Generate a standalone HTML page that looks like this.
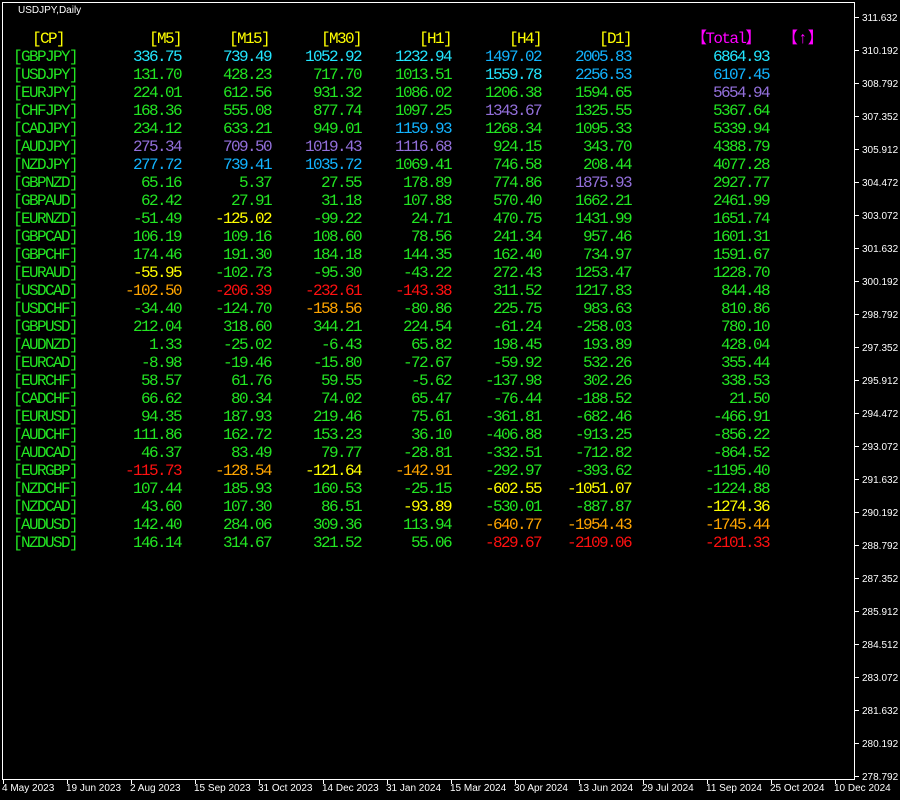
<!DOCTYPE html>
<html><head><meta charset="utf-8"><style>
*{margin:0;padding:0;box-sizing:border-box}
body{width:900px;height:800px;background:#000;position:relative;overflow:hidden;font-family:"Liberation Mono","Noto Sans CJK JP",monospace}
#frame{position:absolute;left:2px;top:2px;width:853px;height:778px;border:1px solid #fff}
.t{position:absolute;font-family:"Liberation Sans","DejaVu Sans",sans-serif;font-size:10px;color:#fff;white-space:nowrap;line-height:12px}
.tk{position:absolute;background:#fff}
.ax .t{margin-top:2px}
.row{position:absolute;left:0;width:900px;height:18px;font-size:16px;line-height:18px;letter-spacing:-1.6px}
.row span{position:absolute;top:0;white-space:nowrap}
.row span.n{width:120px;text-align:right}
.c0{left:13px}
.c1{left:61px}.c2{left:151px}.c3{left:241px}.c4{left:331px}.c5{left:421px}.c6{left:511px}.c7{left:649px}
.g{color:#22e622}.a{color:#22e6ff}.b{color:#12b4ff}.p{color:#9370db}.y{color:#ffff00}.o{color:#ffa500}.r{color:#ff1010}.m{color:#ff00ff}
</style></head><body>
<div id="frame"></div>
<div class="t" style="left:18px;top:5px">USDJPY,Daily</div>
<div class="ax">
<div class="tk" style="left:855px;top:17px;width:4px;height:1px"></div><div class="t" style="left:862px;top:11px">311.632</div>
<div class="tk" style="left:855px;top:50px;width:4px;height:1px"></div><div class="t" style="left:862px;top:44px">310.192</div>
<div class="tk" style="left:855px;top:83px;width:4px;height:1px"></div><div class="t" style="left:862px;top:77px">308.792</div>
<div class="tk" style="left:855px;top:116px;width:4px;height:1px"></div><div class="t" style="left:862px;top:110px">307.352</div>
<div class="tk" style="left:855px;top:149px;width:4px;height:1px"></div><div class="t" style="left:862px;top:143px">305.912</div>
<div class="tk" style="left:855px;top:182px;width:4px;height:1px"></div><div class="t" style="left:862px;top:176px">304.472</div>
<div class="tk" style="left:855px;top:215px;width:4px;height:1px"></div><div class="t" style="left:862px;top:209px">303.072</div>
<div class="tk" style="left:855px;top:248px;width:4px;height:1px"></div><div class="t" style="left:862px;top:242px">301.632</div>
<div class="tk" style="left:855px;top:281px;width:4px;height:1px"></div><div class="t" style="left:862px;top:275px">300.192</div>
<div class="tk" style="left:855px;top:314px;width:4px;height:1px"></div><div class="t" style="left:862px;top:308px">298.792</div>
<div class="tk" style="left:855px;top:347px;width:4px;height:1px"></div><div class="t" style="left:862px;top:341px">297.352</div>
<div class="tk" style="left:855px;top:380px;width:4px;height:1px"></div><div class="t" style="left:862px;top:374px">295.912</div>
<div class="tk" style="left:855px;top:413px;width:4px;height:1px"></div><div class="t" style="left:862px;top:407px">294.472</div>
<div class="tk" style="left:855px;top:446px;width:4px;height:1px"></div><div class="t" style="left:862px;top:440px">293.072</div>
<div class="tk" style="left:855px;top:479px;width:4px;height:1px"></div><div class="t" style="left:862px;top:473px">291.632</div>
<div class="tk" style="left:855px;top:512px;width:4px;height:1px"></div><div class="t" style="left:862px;top:506px">290.192</div>
<div class="tk" style="left:855px;top:545px;width:4px;height:1px"></div><div class="t" style="left:862px;top:539px">288.792</div>
<div class="tk" style="left:855px;top:578px;width:4px;height:1px"></div><div class="t" style="left:862px;top:572px">287.352</div>
<div class="tk" style="left:855px;top:611px;width:4px;height:1px"></div><div class="t" style="left:862px;top:605px">285.912</div>
<div class="tk" style="left:855px;top:644px;width:4px;height:1px"></div><div class="t" style="left:862px;top:638px">284.512</div>
<div class="tk" style="left:855px;top:677px;width:4px;height:1px"></div><div class="t" style="left:862px;top:671px">283.072</div>
<div class="tk" style="left:855px;top:710px;width:4px;height:1px"></div><div class="t" style="left:862px;top:704px">281.632</div>
<div class="tk" style="left:855px;top:743px;width:4px;height:1px"></div><div class="t" style="left:862px;top:737px">280.192</div>
<div class="tk" style="left:855px;top:776px;width:4px;height:1px"></div><div class="t" style="left:862px;top:770px">278.792</div>
</div>
<div class="tk" style="left:3px;top:780px;width:1px;height:4px"></div><div class="t" style="left:2px;top:783px">4 May 2023</div>
<div class="tk" style="left:67px;top:780px;width:1px;height:4px"></div><div class="t" style="left:66px;top:783px">19 Jun 2023</div>
<div class="tk" style="left:131px;top:780px;width:1px;height:4px"></div><div class="t" style="left:130px;top:783px">2 Aug 2023</div>
<div class="tk" style="left:195px;top:780px;width:1px;height:4px"></div><div class="t" style="left:194px;top:783px">15 Sep 2023</div>
<div class="tk" style="left:259px;top:780px;width:1px;height:4px"></div><div class="t" style="left:258px;top:783px">31 Oct 2023</div>
<div class="tk" style="left:323px;top:780px;width:1px;height:4px"></div><div class="t" style="left:322px;top:783px">14 Dec 2023</div>
<div class="tk" style="left:387px;top:780px;width:1px;height:4px"></div><div class="t" style="left:386px;top:783px">31 Jan 2024</div>
<div class="tk" style="left:451px;top:780px;width:1px;height:4px"></div><div class="t" style="left:450px;top:783px">15 Mar 2024</div>
<div class="tk" style="left:515px;top:780px;width:1px;height:4px"></div><div class="t" style="left:514px;top:783px">30 Apr 2024</div>
<div class="tk" style="left:579px;top:780px;width:1px;height:4px"></div><div class="t" style="left:578px;top:783px">13 Jun 2024</div>
<div class="tk" style="left:643px;top:780px;width:1px;height:4px"></div><div class="t" style="left:642px;top:783px">29 Jul 2024</div>
<div class="tk" style="left:707px;top:780px;width:1px;height:4px"></div><div class="t" style="left:706px;top:783px">11 Sep 2024</div>
<div class="tk" style="left:771px;top:780px;width:1px;height:4px"></div><div class="t" style="left:770px;top:783px">25 Oct 2024</div>
<div class="tk" style="left:835px;top:780px;width:1px;height:4px"></div><div class="t" style="left:834px;top:783px">10 Dec 2024</div>

<div class="row" style="top:30px">
<span class="y" style="left:32px">[CP]</span>
<span class="n y c1">[M5]</span><span class="n y" style="left:149px;width:120px;text-align:right">[M15]</span><span class="n y c3">[M30]</span><span class="n y c4">[H1]</span><span class="n y c5">[H4]</span><span class="n y c6">[D1]</span>
<span class="m" style="left:691px">【Total】</span><span class="m" style="left:782px;letter-spacing:0">【↑】</span>
</div>

<div class="row" style="top:48px"><span class="c0 g">[GBPJPY]</span><span class="n c1 a">336.75</span><span class="n c2 a">739.49</span><span class="n c3 a">1052.92</span><span class="n c4 a">1232.94</span><span class="n c5 b">1497.02</span><span class="n c6 b">2005.83</span><span class="n c7 a">6864.93</span></div>
<div class="row" style="top:66px"><span class="c0 g">[USDJPY]</span><span class="n c1 g">131.70</span><span class="n c2 g">428.23</span><span class="n c3 g">717.70</span><span class="n c4 g">1013.51</span><span class="n c5 a">1559.78</span><span class="n c6 b">2256.53</span><span class="n c7 b">6107.45</span></div>
<div class="row" style="top:84px"><span class="c0 g">[EURJPY]</span><span class="n c1 g">224.01</span><span class="n c2 g">612.56</span><span class="n c3 g">931.32</span><span class="n c4 g">1086.02</span><span class="n c5 g">1206.38</span><span class="n c6 g">1594.65</span><span class="n c7 p">5654.94</span></div>
<div class="row" style="top:102px"><span class="c0 g">[CHFJPY]</span><span class="n c1 g">168.36</span><span class="n c2 g">555.08</span><span class="n c3 g">877.74</span><span class="n c4 g">1097.25</span><span class="n c5 p">1343.67</span><span class="n c6 g">1325.55</span><span class="n c7 g">5367.64</span></div>
<div class="row" style="top:120px"><span class="c0 g">[CADJPY]</span><span class="n c1 g">234.12</span><span class="n c2 g">633.21</span><span class="n c3 g">949.01</span><span class="n c4 b">1159.93</span><span class="n c5 g">1268.34</span><span class="n c6 g">1095.33</span><span class="n c7 g">5339.94</span></div>
<div class="row" style="top:138px"><span class="c0 g">[AUDJPY]</span><span class="n c1 p">275.34</span><span class="n c2 p">709.50</span><span class="n c3 p">1019.43</span><span class="n c4 p">1116.68</span><span class="n c5 g">924.15</span><span class="n c6 g">343.70</span><span class="n c7 g">4388.79</span></div>
<div class="row" style="top:156px"><span class="c0 g">[NZDJPY]</span><span class="n c1 b">277.72</span><span class="n c2 b">739.41</span><span class="n c3 b">1035.72</span><span class="n c4 g">1069.41</span><span class="n c5 g">746.58</span><span class="n c6 g">208.44</span><span class="n c7 g">4077.28</span></div>
<div class="row" style="top:174px"><span class="c0 g">[GBPNZD]</span><span class="n c1 g">65.16</span><span class="n c2 g">5.37</span><span class="n c3 g">27.55</span><span class="n c4 g">178.89</span><span class="n c5 g">774.86</span><span class="n c6 p">1875.93</span><span class="n c7 g">2927.77</span></div>
<div class="row" style="top:192px"><span class="c0 g">[GBPAUD]</span><span class="n c1 g">62.42</span><span class="n c2 g">27.91</span><span class="n c3 g">31.18</span><span class="n c4 g">107.88</span><span class="n c5 g">570.40</span><span class="n c6 g">1662.21</span><span class="n c7 g">2461.99</span></div>
<div class="row" style="top:210px"><span class="c0 g">[EURNZD]</span><span class="n c1 g">-51.49</span><span class="n c2 y">-125.02</span><span class="n c3 g">-99.22</span><span class="n c4 g">24.71</span><span class="n c5 g">470.75</span><span class="n c6 g">1431.99</span><span class="n c7 g">1651.74</span></div>
<div class="row" style="top:228px"><span class="c0 g">[GBPCAD]</span><span class="n c1 g">106.19</span><span class="n c2 g">109.16</span><span class="n c3 g">108.60</span><span class="n c4 g">78.56</span><span class="n c5 g">241.34</span><span class="n c6 g">957.46</span><span class="n c7 g">1601.31</span></div>
<div class="row" style="top:246px"><span class="c0 g">[GBPCHF]</span><span class="n c1 g">174.46</span><span class="n c2 g">191.30</span><span class="n c3 g">184.18</span><span class="n c4 g">144.35</span><span class="n c5 g">162.40</span><span class="n c6 g">734.97</span><span class="n c7 g">1591.67</span></div>
<div class="row" style="top:264px"><span class="c0 g">[EURAUD]</span><span class="n c1 y">-55.95</span><span class="n c2 g">-102.73</span><span class="n c3 g">-95.30</span><span class="n c4 g">-43.22</span><span class="n c5 g">272.43</span><span class="n c6 g">1253.47</span><span class="n c7 g">1228.70</span></div>
<div class="row" style="top:282px"><span class="c0 g">[USDCAD]</span><span class="n c1 o">-102.50</span><span class="n c2 r">-206.39</span><span class="n c3 r">-232.61</span><span class="n c4 r">-143.38</span><span class="n c5 g">311.52</span><span class="n c6 g">1217.83</span><span class="n c7 g">844.48</span></div>
<div class="row" style="top:300px"><span class="c0 g">[USDCHF]</span><span class="n c1 g">-34.40</span><span class="n c2 g">-124.70</span><span class="n c3 o">-158.56</span><span class="n c4 g">-80.86</span><span class="n c5 g">225.75</span><span class="n c6 g">983.63</span><span class="n c7 g">810.86</span></div>
<div class="row" style="top:318px"><span class="c0 g">[GBPUSD]</span><span class="n c1 g">212.04</span><span class="n c2 g">318.60</span><span class="n c3 g">344.21</span><span class="n c4 g">224.54</span><span class="n c5 g">-61.24</span><span class="n c6 g">-258.03</span><span class="n c7 g">780.10</span></div>
<div class="row" style="top:336px"><span class="c0 g">[AUDNZD]</span><span class="n c1 g">1.33</span><span class="n c2 g">-25.02</span><span class="n c3 g">-6.43</span><span class="n c4 g">65.82</span><span class="n c5 g">198.45</span><span class="n c6 g">193.89</span><span class="n c7 g">428.04</span></div>
<div class="row" style="top:354px"><span class="c0 g">[EURCAD]</span><span class="n c1 g">-8.98</span><span class="n c2 g">-19.46</span><span class="n c3 g">-15.80</span><span class="n c4 g">-72.67</span><span class="n c5 g">-59.92</span><span class="n c6 g">532.26</span><span class="n c7 g">355.44</span></div>
<div class="row" style="top:372px"><span class="c0 g">[EURCHF]</span><span class="n c1 g">58.57</span><span class="n c2 g">61.76</span><span class="n c3 g">59.55</span><span class="n c4 g">-5.62</span><span class="n c5 g">-137.98</span><span class="n c6 g">302.26</span><span class="n c7 g">338.53</span></div>
<div class="row" style="top:390px"><span class="c0 g">[CADCHF]</span><span class="n c1 g">66.62</span><span class="n c2 g">80.34</span><span class="n c3 g">74.02</span><span class="n c4 g">65.47</span><span class="n c5 g">-76.44</span><span class="n c6 g">-188.52</span><span class="n c7 g">21.50</span></div>
<div class="row" style="top:408px"><span class="c0 g">[EURUSD]</span><span class="n c1 g">94.35</span><span class="n c2 g">187.93</span><span class="n c3 g">219.46</span><span class="n c4 g">75.61</span><span class="n c5 g">-361.81</span><span class="n c6 g">-682.46</span><span class="n c7 g">-466.91</span></div>
<div class="row" style="top:426px"><span class="c0 g">[AUDCHF]</span><span class="n c1 g">111.86</span><span class="n c2 g">162.72</span><span class="n c3 g">153.23</span><span class="n c4 g">36.10</span><span class="n c5 g">-406.88</span><span class="n c6 g">-913.25</span><span class="n c7 g">-856.22</span></div>
<div class="row" style="top:444px"><span class="c0 g">[AUDCAD]</span><span class="n c1 g">46.37</span><span class="n c2 g">83.49</span><span class="n c3 g">79.77</span><span class="n c4 g">-28.81</span><span class="n c5 g">-332.51</span><span class="n c6 g">-712.82</span><span class="n c7 g">-864.52</span></div>
<div class="row" style="top:462px"><span class="c0 g">[EURGBP]</span><span class="n c1 r">-115.73</span><span class="n c2 o">-128.54</span><span class="n c3 y">-121.64</span><span class="n c4 o">-142.91</span><span class="n c5 g">-292.97</span><span class="n c6 g">-393.62</span><span class="n c7 g">-1195.40</span></div>
<div class="row" style="top:480px"><span class="c0 g">[NZDCHF]</span><span class="n c1 g">107.44</span><span class="n c2 g">185.93</span><span class="n c3 g">160.53</span><span class="n c4 g">-25.15</span><span class="n c5 y">-602.55</span><span class="n c6 y">-1051.07</span><span class="n c7 g">-1224.88</span></div>
<div class="row" style="top:498px"><span class="c0 g">[NZDCAD]</span><span class="n c1 g">43.60</span><span class="n c2 g">107.30</span><span class="n c3 g">86.51</span><span class="n c4 y">-93.89</span><span class="n c5 g">-530.01</span><span class="n c6 g">-887.87</span><span class="n c7 y">-1274.36</span></div>
<div class="row" style="top:516px"><span class="c0 g">[AUDUSD]</span><span class="n c1 g">142.40</span><span class="n c2 g">284.06</span><span class="n c3 g">309.36</span><span class="n c4 g">113.94</span><span class="n c5 o">-640.77</span><span class="n c6 o">-1954.43</span><span class="n c7 o">-1745.44</span></div>
<div class="row" style="top:534px"><span class="c0 g">[NZDUSD]</span><span class="n c1 g">146.14</span><span class="n c2 g">314.67</span><span class="n c3 g">321.52</span><span class="n c4 g">55.06</span><span class="n c5 r">-829.67</span><span class="n c6 r">-2109.06</span><span class="n c7 r">-2101.33</span></div>
</body></html>
